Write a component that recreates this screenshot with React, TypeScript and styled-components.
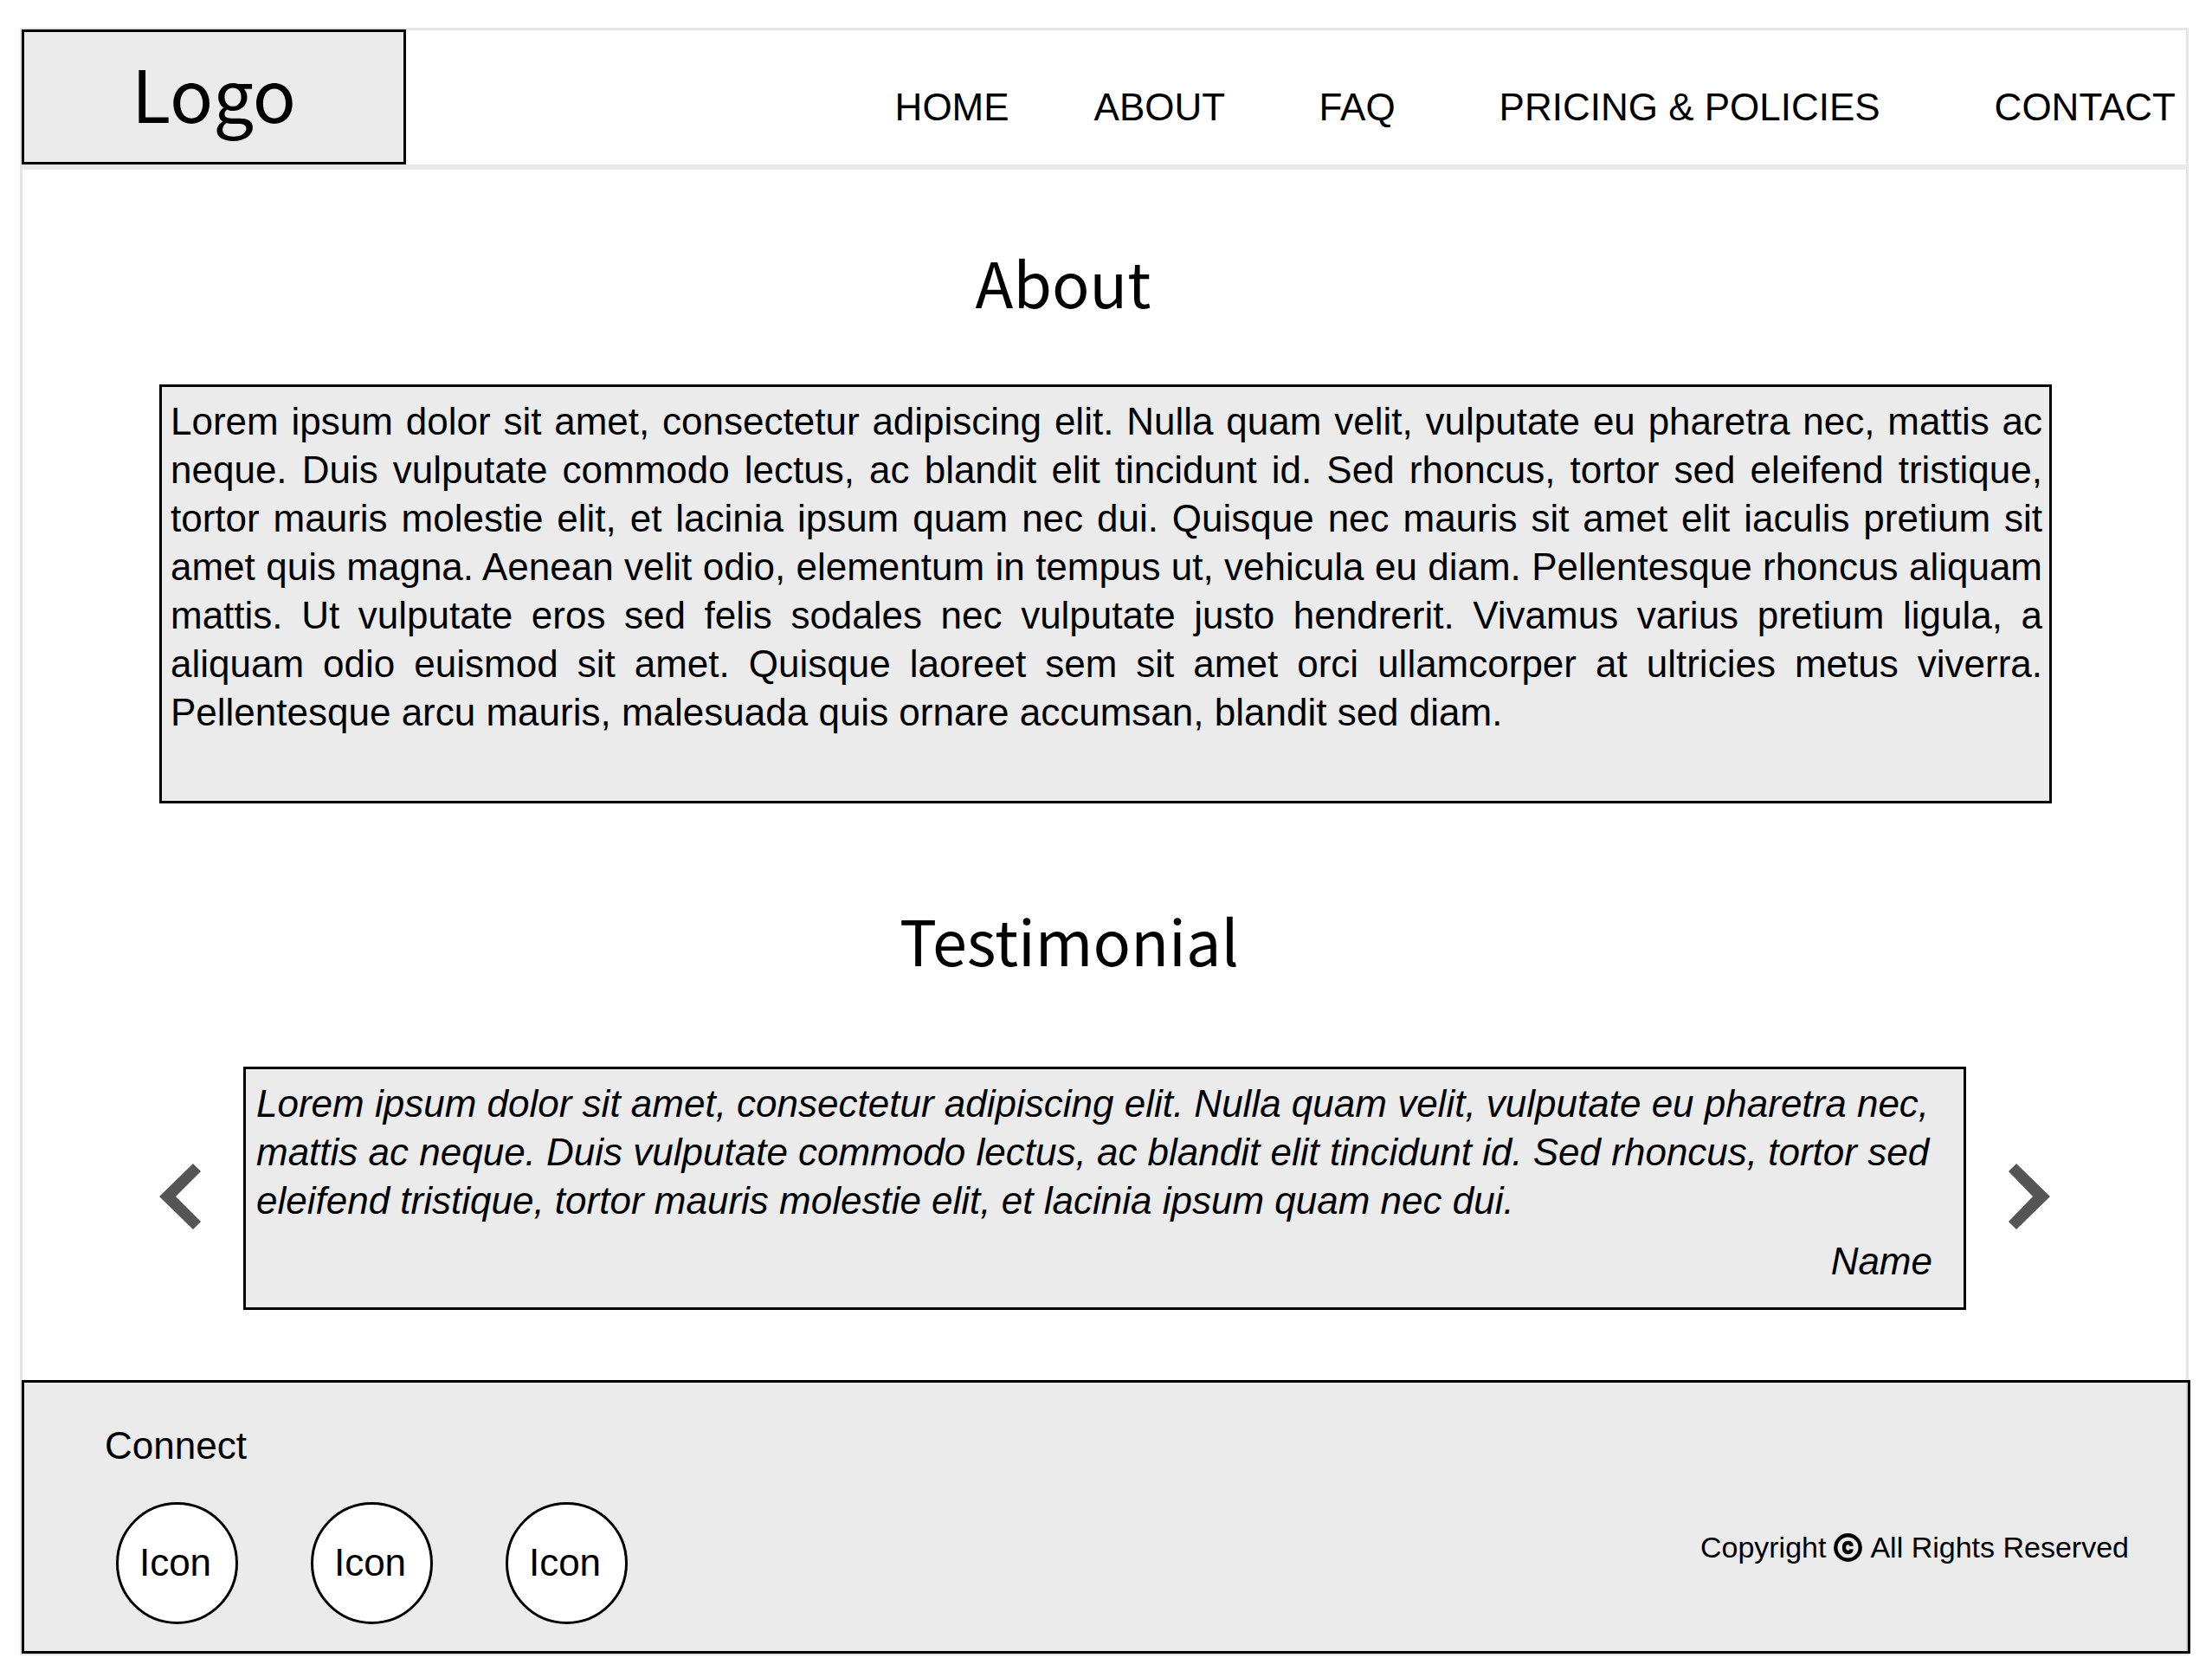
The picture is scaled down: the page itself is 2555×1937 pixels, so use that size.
import React from "react";
import styled, { createGlobalStyle } from "styled-components";

const ink = "#000";
const panel = "#ebebeb";
const rule = "#e6e6e6";
const displayFont = `"Noto Sans CJK SC", "Noto Sans", sans-serif`;

const GlobalStyle = createGlobalStyle`
  *, *::before, *::after { box-sizing: border-box; }
  body {
    margin: 0;
    background: #fff;
    color: ${ink};
    font-family: "Liberation Sans", Arial, Helvetica, sans-serif;
    font-size: 44px;
    line-height: 56px;
  }
  p, h1, h2, ul, blockquote, figure { margin: 0; padding: 0; }
`;

const Frame = styled.div`
  margin: 32px 27px 25px 23px;
  border: 3px solid ${rule};
`;

const Header = styled.header`
  display: flex;
  align-items: center;
  justify-content: space-between;
  border-bottom: 6px solid #eaeaea;
`;

const Logo = styled.a`
  display: flex;
  align-items: center;
  justify-content: center;
  width: 444px;
  height: 156px;
  margin: -1px 0 0 -1px;
  padding-bottom: 12px;
  border: 3px solid ${ink};
  background: ${panel};
  color: inherit;
  font-family: ${displayFont};
  font-size: 83px;
  line-height: 120px;
  text-decoration: none;
`;

const NavList = styled.ul`
  display: grid;
  grid-template-columns: 230px 260px 208px 572px auto;
  padding-right: 12px;
  padding-top: 22px;
  list-style: none;
`;

const NavLink = styled.a`
  color: inherit;
  text-decoration: none;
  white-space: nowrap;
`;

const Main = styled.main`
  padding: 77px 155px 81px 158px;
`;

const Heading = styled.h2<{ $inset: number }>`
  padding-right: ${(p) => p.$inset}px;
  font-family: ${displayFont};
  font-size: 72px;
  font-weight: 400;
  line-height: 104px;
  text-align: center;
`;

const AboutPanel = styled.p`
  margin: 67px 0 105px;
  padding: 12px 8px 74px 10px;
  border: 3px solid ${ink};
  background: ${panel};
  text-align: justify;
`;

const Carousel = styled.div`
  display: flex;
  align-items: center;
  gap: 49px;
  margin-top: 95px;
  padding-right: 2px;
`;

const ArrowButton = styled.button`
  flex: none;
  display: block;
  width: 48px;
  height: 94px;
  padding: 18px 0 0;
  border: 0;
  background: none;
  color: #555;
  cursor: pointer;

  svg { display: block; }
`;

const Quote = styled.figure`
  flex: 1;
  padding: 12px 36px 25px 12px;
  border: 3px solid ${ink};
  background: ${panel};
  font-style: italic;
`;

const Author = styled.figcaption`
  margin-top: 14px;
  text-align: right;
`;

const Footer = styled.footer`
  display: flex;
  align-items: flex-end;
  justify-content: space-between;
  margin: 0 -5px -1px -1px;
  padding: 45px 68px 31px 93px;
  border: 3px solid ${ink};
  background: ${panel};
  box-shadow: inset -2px 0 #cfcfcf;
`;

const SocialList = styled.ul`
  display: flex;
  gap: 84px;
  margin-top: 37px;
  padding-left: 13px;
  list-style: none;
`;

const SocialLink = styled.a`
  display: flex;
  align-items: center;
  justify-content: center;
  width: 141px;
  height: 141px;
  padding: 0 4px 2px 0;
  border: 3px solid ${ink};
  border-radius: 50%;
  background: #fff;
  color: inherit;
  text-decoration: none;
`;

const Copyright = styled.p`
  display: flex;
  align-items: center;
  gap: 9px;
  margin-bottom: 69px;
  font-size: 34px;
  line-height: 40px;
`;

const navItems = ["HOME", "ABOUT", "FAQ", "PRICING & POLICIES", "CONTACT"];
const socialItems = ["first", "second", "third"];

function Arrow({ direction }: { direction: "left" | "right" }) {
  const points =
    direction === "left"
      ? "0,38 39,0 48,9 19,38 48,67 39,76"
      : "48,38 9,0 0,9 28,38 0,67 9,76";
  return (
    <svg width="48" height="76" viewBox="0 0 48 76" aria-hidden="true">
      <polygon points={points} fill="currentColor" />
    </svg>
  );
}

function CopyrightMark() {
  return (
    <svg width="33" height="33" viewBox="0 0 33 33" role="img" aria-label="copyright">
      <circle cx="16.5" cy="16.5" r="14.2" fill="none" stroke="currentColor" strokeWidth="4.4" />
      <path
        d="M20.6 14.8 C20.4 12.2 18.9 11 16.7 11 C13.6 11 12 13.2 12 16.5 C12 19.8 13.6 22 16.7 22 C18.9 22 20.4 20.8 20.6 18.4"
        fill="none"
        stroke="currentColor"
        strokeWidth="4.4"
      />
    </svg>
  );
}

export default function App() {
  return (
    <>
      <GlobalStyle />
      <Frame>
        <Header>
          <Logo href="#">Logo</Logo>
          <nav>
            <NavList>
              {navItems.map((item) => (
                <li key={item}>
                  <NavLink href="#">{item}</NavLink>
                </li>
              ))}
            </NavList>
          </nav>
        </Header>
        <Main>
          <section>
            <Heading $inset={98}>About</Heading>
            <AboutPanel>
              Lorem ipsum dolor sit amet, consectetur adipiscing elit. Nulla quam velit, vulputate eu
              pharetra nec, mattis ac neque. Duis vulputate commodo lectus, ac blandit elit tincidunt
              id. Sed rhoncus, tortor sed eleifend tristique, tortor mauris molestie elit, et lacinia
              ipsum quam nec dui. Quisque nec mauris sit amet elit iaculis pretium sit amet quis
              magna. Aenean velit odio, elementum in tempus ut, vehicula eu diam. Pellentesque rhoncus
              aliquam mattis. Ut vulputate eros sed felis sodales nec vulputate justo hendrerit.
              Vivamus varius pretium ligula, a aliquam odio euismod sit amet. Quisque laoreet sem sit
              amet orci ullamcorper at ultricies metus viverra. Pellentesque arcu mauris, malesuada
              quis ornare accumsan, blandit sed diam.
            </AboutPanel>
          </section>
          <section>
            <Heading $inset={84}>Testimonial</Heading>
            <Carousel>
              <ArrowButton type="button" aria-label="Previous testimonial">
                <Arrow direction="left" />
              </ArrowButton>
              <Quote>
                <blockquote>
                  Lorem ipsum dolor sit amet, consectetur adipiscing elit. Nulla quam velit, vulputate
                  eu pharetra nec, mattis ac neque. Duis vulputate commodo lectus, ac blandit elit
                  tincidunt id. Sed rhoncus, tortor sed eleifend tristique, tortor mauris molestie
                  elit, et lacinia ipsum quam nec dui.
                </blockquote>
                <Author>Name</Author>
              </Quote>
              <ArrowButton type="button" aria-label="Next testimonial">
                <Arrow direction="right" />
              </ArrowButton>
            </Carousel>
          </section>
        </Main>
        <Footer>
          <div>
            <p>Connect</p>
            <SocialList>
              {socialItems.map((item) => (
                <li key={item}>
                  <SocialLink href="#">Icon</SocialLink>
                </li>
              ))}
            </SocialList>
          </div>
          <Copyright>
            <span>Copyright</span>
            <CopyrightMark />
            <span>All Rights Reserved</span>
          </Copyright>
        </Footer>
      </Frame>
    </>
  );
}
